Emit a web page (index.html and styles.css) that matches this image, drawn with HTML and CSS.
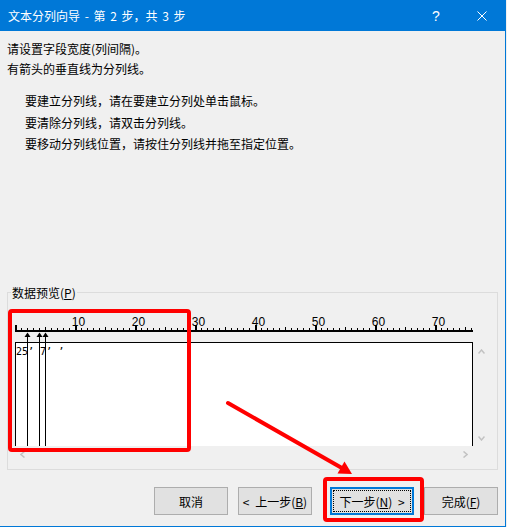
FILE: index.html
```html
<!DOCTYPE html>
<html lang="zh-CN">
<head>
    <meta charset="utf-8" />
    <title>文本分列向导 - 第 2 步，共 3 步</title>
    <link rel="stylesheet" href="styles.css">
</head>
<body>
    <div class="window">
        <div class="titlebar">
            <span class="title">文本分列向导 - 第 2 步，共 3 步</span>
            <span class="caption-btn help">?</span>
            <span class="caption-btn">
                <svg width="10" height="10" viewBox="0 0 10 10"><path d="M0.5 0.5L9.5 9.5M9.5 0.5L0.5 9.5" stroke="#fff" stroke-width="1"/></svg>
            </span>
        </div>

        <div class="content">
            <p class="intro">请设置字段宽度(列间隔)。<br>有箭头的垂直线为分列线。</p>

            <ul class="tips">
                <li>要建立分列线，请在要建立分列处单击鼠标。</li>
                <li>要清除分列线，请双击分列线。</li>
                <li>要移动分列线位置，请按住分列线并拖至指定位置。</li>
            </ul>

            <div class="group">
                <span class="legend">数据预览(<u>P</u>)</span>
                <div class="preview">
                    <svg class="ruler" width="458" height="30" viewBox="0 0 458 30">
                        <defs>
                            <pattern id="tick1" width="6" height="30" patternUnits="userSpaceOnUse"><rect x="0" y="16" width="1" height="2" /></pattern>
                            <pattern id="tick5" width="30" height="30" patternUnits="userSpaceOnUse"><rect x="0" y="15" width="1" height="3" /></pattern>
                            <pattern id="tick10" width="60" height="30" patternUnits="userSpaceOnUse"><rect x="0" y="13" width="2" height="5" /></pattern>
                        </defs>
                        <rect width="458" height="30" fill="url(#tick1)" />
                        <rect width="458" height="30" fill="url(#tick5)" />
                        <rect width="458" height="30" fill="url(#tick10)" />
                        <rect x="0" y="18" width="458" height="2" />
                        <g class="ruler-num">
                            <text x="63.5" y="13.5">10</text>
                            <text x="123.5" y="13.5">20</text>
                            <text x="183.5" y="13.5">30</text>
                            <text x="243.5" y="13.5">40</text>
                            <text x="303.5" y="13.5">50</text>
                            <text x="363.5" y="13.5">60</text>
                            <text x="423.5" y="13.5">70</text>
                        </g>
                    </svg>

                    <div class="data-row">
                        <div class="data"><pre>25’ 7’ ’</pre></div>
                        <div class="vscroll">
                            <svg width="7" height="5" viewBox="0 0 7 5"><path d="M0.5 4.5L3.5 1L6.5 4.5" /></svg>
                            <svg width="7" height="5" viewBox="0 0 7 5"><path d="M0.5 0.5L3.5 4L6.5 0.5" /></svg>
                        </div>
                    </div>
                    <div class="hscroll">
                        <svg width="5" height="7" viewBox="0 0 5 7"><path d="M4.5 0.5L1 3.5L4.5 6.5" /></svg>
                        <svg width="5" height="7" viewBox="0 0 5 7"><path d="M0.5 0.5L4 3.5L0.5 6.5" /></svg>
                    </div>

                    <!-- 分列线 -->
                    <svg class="breaks" width="458" height="134" viewBox="0 0 458 134">
                        <rect x="12" y="23" width="1" height="111" />
                        <rect x="24" y="23" width="1" height="111" />
                        <rect x="30" y="23" width="1" height="111" />
                        <polygon points="12.5,20.5 9.5,25 15.5,25" />
                        <polygon points="24.5,20.5 21.5,25 27.5,25" />
                        <polygon points="30.5,20.5 27.5,25 33.5,25" />
                    </svg>
                </div>
            </div>

            <div class="buttons">
                <button class="btn">取消</button>
                <button class="btn">&lt; 上一步(<u>B</u>)</button>
                <button class="btn btn-next">下一步(<u>N</u>) &gt;</button>
                <button class="btn">完成(<u>F</u>)</button>
            </div>
        </div>

        <!-- 标注 -->
        <svg class="marks" width="507" height="527" viewBox="0 0 507 527">
            <rect x="10" y="311" width="179" height="139" rx="2" />
            <rect x="325" y="479" width="97" height="41" rx="2" />
            <line x1="228" y1="403" x2="341" y2="467.5" />
            <polygon class="head" points="352,474 344.5,461.5 337.5,473.5" />
        </svg>
    </div>
</body>
</html>
```

FILE: styles.css
```css
body {
    margin: 0;
    background: #f0f0f0;
    font-family: "Noto Sans CJK SC", sans-serif;
    font-size: 12px;
    color: #000;
}
.window {
    position: relative;
    width: 506px;
    height: 527px;
    box-sizing: border-box;
    border-right: 1px solid #0078d7;
    border-bottom: 1px solid #0078d7;
    background: #f0f0f0;
    display: flex;
    flex-direction: column;
}
.titlebar {
    height: 31px;
    flex-shrink: 0;
    background: #0078d7;
    color: #fff;
    display: flex;
    align-items: center;
}
.title {
    flex: 1;
    padding-left: 8px;
    line-height: 31px;
    word-spacing: 2px;
}
.caption-btn {
    width: 46px;
    height: 31px;
    display: flex;
    align-items: center;
    justify-content: center;
}
.help {
    font-family: "Liberation Sans", sans-serif;
    font-size: 14px;
}
.content {
    flex: 1;
    display: flex;
    flex-direction: column;
    padding: 8px 7px 11px;
}
.intro {
    margin: 0;
    line-height: 20px;
}
.tips {
    margin: 11px 0 0;
    padding-left: 18px;
    list-style: none;
    line-height: 21.5px;
}
.group {
    position: relative;
    margin-top: auto;
    height: 178px;
    box-sizing: border-box;
    border: 1px solid #dcdcdc;
    padding: 19px 0 0 7px;
}
.legend {
    position: absolute;
    left: 3px;
    top: -8px;
    padding: 0 1px;
    background: #f0f0f0;
    line-height: 16px;
}
.preview {
    position: relative;
    width: 475px;
}
.ruler {
    display: block;
}
.ruler-num {
    font-family: "Liberation Sans", sans-serif;
    font-size: 12px;
    text-anchor: middle;
}
.data-row {
    display: flex;
    height: 104px;
}
.data {
    width: 458px;
    box-sizing: border-box;
    border: 1px solid #000;
    border-bottom: none;
    background: #fff;
}
.data pre {
    margin: 0;
    padding-top: 3px;
    font-family: "DejaVu Sans Mono", monospace;
    font-size: 10px;
    line-height: 12px;
}
.vscroll {
    width: 17px;
    box-sizing: border-box;
    padding: 7px 0 5px;
    display: flex;
    flex-direction: column;
    justify-content: space-between;
    align-items: center;
}
.hscroll {
    width: 458px;
    height: 17px;
    box-sizing: border-box;
    padding: 0 5px;
    display: flex;
    justify-content: space-between;
    align-items: center;
}
.vscroll path,
.hscroll path {
    fill: none;
    stroke: #c2c2c2;
    stroke-width: 1.5;
}
.breaks {
    position: absolute;
    left: 0;
    top: 0;
    pointer-events: none;
}
.buttons {
    display: flex;
    justify-content: flex-end;
    margin-top: 17px;
}
.btn {
    width: 74px;
    height: 28px;
    box-sizing: border-box;
    margin-left: 10px;
    padding: 0;
    border: 1px solid #adadad;
    background: #e1e1e1;
    font-family: inherit;
    font-size: 12px;
    color: #000;
    word-spacing: 3px;
}
.btn-next {
    width: 84px;
    margin-left: 18px;
    border: 2px solid #0078d7;
    outline: 1px dotted #000;
    outline-offset: -4px;
}
.marks {
    position: absolute;
    left: 0;
    top: 0;
    pointer-events: none;
}
.marks rect,
.marks line {
    fill: none;
    stroke: #ff0000;
    stroke-width: 4;
}
.marks line {
    stroke-linecap: round;
}
.marks .head {
    fill: #ff0000;
}
```
